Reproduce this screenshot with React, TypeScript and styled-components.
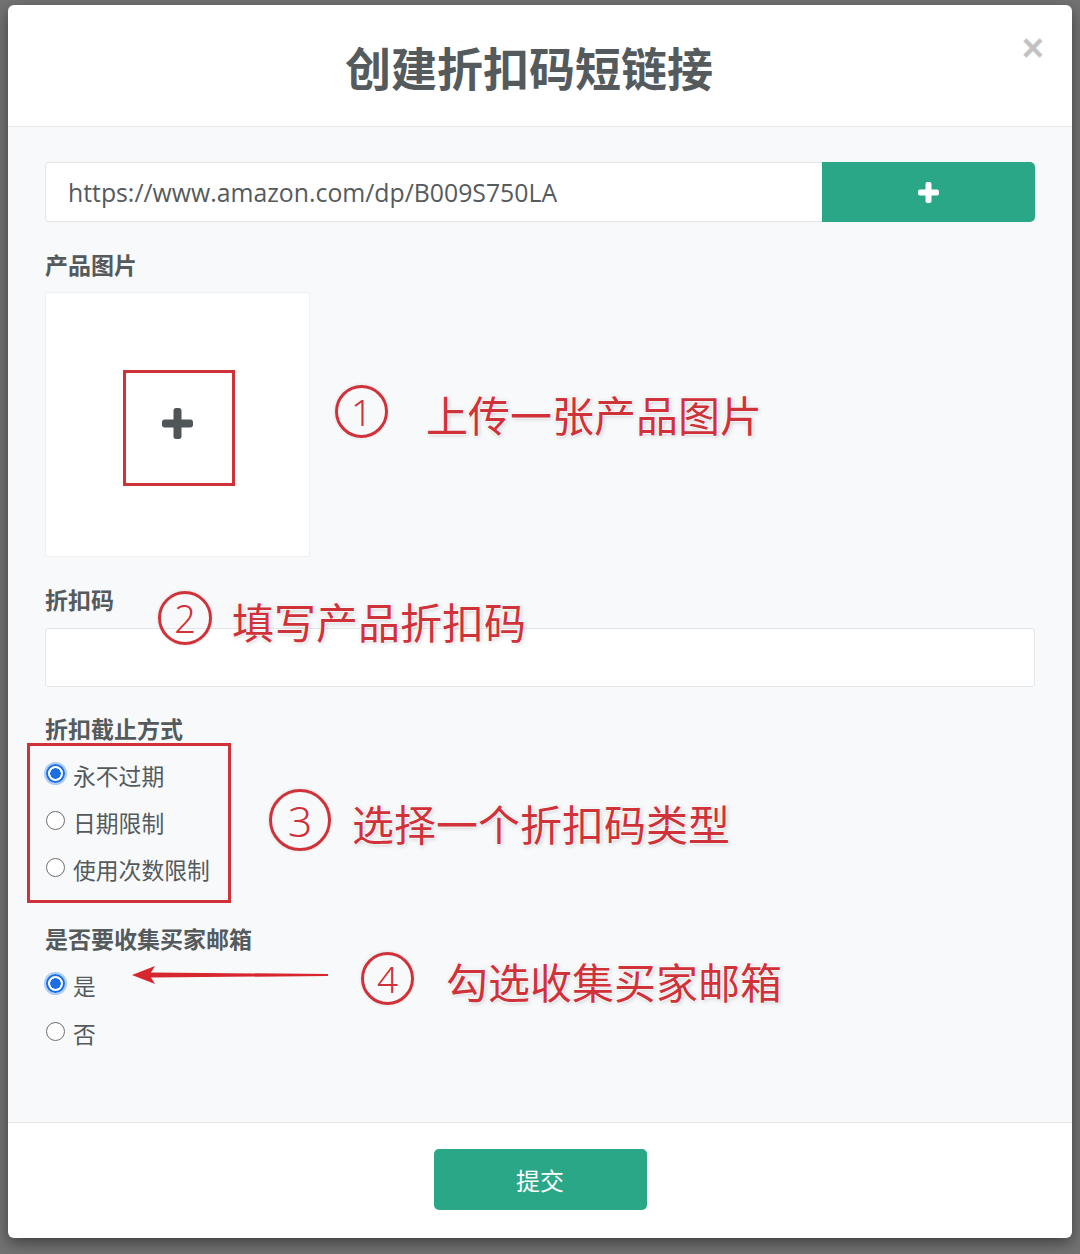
import styled, { createGlobalStyle } from "styled-components"

const GlobalStyle = createGlobalStyle`
  html, body {
    margin: 0;
    padding: 0;
  }
  body {
    background: #737373;
    font-family: "Noto Sans CJK SC", "Noto Sans", sans-serif;
  }
`

const RED = "#d0323a"
const GREEN = "#2aa787"
const TEXT = "#555a5c"

type Opt = { label: string; checked?: boolean }

const expiryOptions: Opt[] = [
  { label: "永不过期", checked: true },
  { label: "日期限制" },
  { label: "使用次数限制" },
]

const emailOptions: Opt[] = [{ label: "是", checked: true }, { label: "否" }]

const PlusIcon = ({ size, arm, color }: { size: number; arm: number; color: string }) => (
  <svg width={size} height={size} viewBox={`0 0 ${size} ${size}`}>
    <rect x={(size - arm) / 2} y={0} width={arm} height={size} rx={arm / 3} fill={color} />
    <rect x={0} y={(size - arm) / 2} width={size} height={arm} rx={arm / 3} fill={color} />
  </svg>
)

const Arrow = () => (
  <ArrowSvg width="196" height="24" viewBox="0 0 196 24">
    <polygon
      points="0,12 23,3 19,9.5 196,11 196,13 19,14.5 23,21"
      fill="#d8262f"
    />
  </ArrowSvg>
)

const RadioList = ({ options, $row }: { options: Opt[]; $row: number }) => (
  <>
    {options.map((o) => (
      <RadioRow key={o.label} $h={$row}>
        <RadioDot $checked={!!o.checked} />
        <span>{o.label}</span>
      </RadioRow>
    ))}
  </>
)

export default function App() {
  return (
    <Page>
      <GlobalStyle />
      <Modal>
        <Header>
          <Title>创建折扣码短链接</Title>
          <Close>×</Close>
        </Header>
        <Body>
          <UrlGroup>
            <UrlInput>https://www.amazon.com/dp/B009S750LA</UrlInput>
            <AddButton>
              <PlusIcon size={21} arm={6} color="#fff" />
            </AddButton>
          </UrlGroup>

          <Label $top={27} $bottom={13}>产品图片</Label>
          <ImageBox>
            <RedFrame>
              <PlusIcon size={31} arm={8} color="#505558" />
            </RedFrame>
          </ImageBox>

          <Label $top={27} $bottom={14}>折扣码</Label>
          <CodeInput />

          <Label $top={26} $bottom={9}>折扣截止方式</Label>
          <RadioGroup>
            <RadioList options={expiryOptions} $row={47} />
            <GroupFrame />
          </RadioGroup>

          <Label $top={30} $bottom={8}>是否要收集买家邮箱</Label>
          <RadioGroup>
            <RadioList options={emailOptions} $row={48} />
          </RadioGroup>

          <Note $x={327} $y={254} $gap={38}>
            <Num $size={53}>1</Num>
            <NoteText>上传一张产品图片</NoteText>
          </Note>
          <Note $x={150} $y={461} $gap={20}>
            <Num $size={54}>2</Num>
            <NoteText>填写产品折扣码</NoteText>
          </Note>
          <Note $x={261} $y={663} $gap={21}>
            <Num $size={62}>3</Num>
            <NoteText>选择一个折扣码类型</NoteText>
          </Note>
          <Note $x={353} $y={821} $gap={32}>
            <Num $size={53}>4</Num>
            <NoteText>勾选收集买家邮箱</NoteText>
          </Note>
          <Arrow />
        </Body>
        <Footer>
          <SubmitButton>提交</SubmitButton>
        </Footer>
      </Modal>
    </Page>
  )
}

const Page = styled.div`
  width: 1080px;
  height: 1254px;
  box-sizing: border-box;
  padding: 5px 8px 0;
  background: #737373;
  overflow: hidden;
`

const Modal = styled.div`
  width: 1064px;
  height: 1233px;
  background: #fff;
  border-radius: 6px;
  box-shadow: 0 5px 15px rgba(0, 0, 0, 0.45);
  display: flex;
  flex-direction: column;
  overflow: hidden;
`

const Header = styled.header`
  position: relative;
  flex: none;
  height: 121px;
  display: flex;
  align-items: center;
  justify-content: center;
  border-bottom: 1px solid #e6e8ea;
`

const Title = styled.h1`
  margin: 0 22px 0 0;
  font-size: 46px;
  font-weight: 700;
  color: ${TEXT};
`

const Close = styled.span`
  position: absolute;
  right: 28px;
  top: 22px;
  font-family: "Liberation Sans", Arial, sans-serif;
  font-size: 38px;
  font-weight: 700;
  color: #c2c2c2;
`

const Body = styled.main`
  position: relative;
  flex: 1;
  display: flex;
  flex-direction: column;
  align-items: flex-start;
  padding: 35px 37px 0;
  background: #f7f9fb;
`

const UrlGroup = styled.div`
  display: flex;
  width: 100%;
  height: 60px;
`

const UrlInput = styled.div`
  flex: 1;
  display: flex;
  align-items: center;
  padding-left: 22px;
  background: #fff;
  border: 1px solid #e4e7ea;
  border-right: none;
  border-radius: 4px 0 0 4px;
  font-family: "Open Sans", "Noto Sans", sans-serif;
  font-size: 24.8px;
  color: ${TEXT};
`

const AddButton = styled.div`
  width: 213px;
  display: flex;
  align-items: center;
  justify-content: center;
  background: ${GREEN};
  border-radius: 0 5px 5px 0;
`

const Label = styled.div<{ $top: number; $bottom: number }>`
  margin: ${(p) => p.$top}px 0 ${(p) => p.$bottom}px;
  font-size: 23px;
  line-height: 30px;
  font-weight: 700;
  color: ${TEXT};
`

const ImageBox = styled.div`
  width: 265px;
  height: 265px;
  box-sizing: border-box;
  display: flex;
  align-items: center;
  justify-content: center;
  background: #fff;
  border: 1px solid #eef0f2;
`

const RedFrame = styled.div`
  width: 112px;
  height: 116px;
  box-sizing: border-box;
  margin: 6px 0 0 3px;
  display: flex;
  align-items: center;
  justify-content: center;
  border: 3px solid ${RED};
  & > svg {
    margin: -8px 0 0 -4px;
  }
`

const CodeInput = styled.div`
  width: 100%;
  height: 59px;
  box-sizing: border-box;
  background: #fff;
  border: 1px solid #e4e7ea;
  border-radius: 3px;
`

const RadioGroup = styled.div`
  position: relative;
  display: flex;
  flex-direction: column;
`

const RadioRow = styled.div<{ $h: number }>`
  height: ${(p) => p.$h}px;
  display: flex;
  align-items: center;
  gap: 8px;
  font-size: 22.8px;
  color: ${TEXT};
`

const RadioDot = styled.span<{ $checked: boolean }>`
  width: 19px;
  height: 19px;
  box-sizing: border-box;
  border-radius: 50%;
  margin-left: 1px;
  border: ${(p) => (p.$checked ? "2px solid #1b6fe3" : "1.5px solid #6e6e6e")};
  background: ${(p) =>
    p.$checked ? "radial-gradient(circle, #1b6fe3 0 5px, #fff 5.5px)" : "#fff"};
  box-shadow: ${(p) => (p.$checked ? "0 0 0 2px rgba(80, 150, 240, 0.45)" : "none")};
  margin-top: -4px;
`

const GroupFrame = styled.div`
  position: absolute;
  left: -18px;
  top: -9px;
  width: 204px;
  height: 160px;
  box-sizing: border-box;
  border: 3px solid ${RED};
`

const Note = styled.div<{ $x: number; $y: number; $gap: number }>`
  position: absolute;
  left: ${(p) => p.$x}px;
  top: ${(p) => p.$y}px;
  height: 60px;
  display: flex;
  align-items: center;
  gap: ${(p) => p.$gap}px;
  color: ${RED};
`

const Num = styled.span<{ $size: number }>`
  width: ${(p) => p.$size}px;
  height: ${(p) => p.$size}px;
  box-sizing: border-box;
  flex: none;
  display: flex;
  align-items: center;
  justify-content: center;
  border: 3px solid ${RED};
  border-radius: 50%;
  font-family: "Noto Sans", sans-serif;
  font-size: ${(p) => Math.round(p.$size * 0.7)}px;
  font-weight: 300;
  line-height: 1;
  box-shadow: 0 0 2px #fff, 0 0 3px rgba(0, 0, 0, 0.2);
  text-shadow: 0 0 2px #fff, 0 0 3px #fff;
`

const NoteText = styled.span`
  font-size: 42px;
  font-weight: 400;
  line-height: 1;
  margin-top: 6px;
  white-space: nowrap;
  text-shadow: 0 0 2px #fff, 0 0 2px #fff, 0 0 3px #fff, 1px 1px 4px rgba(0, 0, 0, 0.25);
`

const ArrowSvg = styled.svg`
  position: absolute;
  left: 124px;
  top: 836px;
`

const Footer = styled.footer`
  flex: none;
  height: 115px;
  display: flex;
  align-items: center;
  justify-content: center;
  border-top: 1px solid #e6e8ea;
`

const SubmitButton = styled.button`
  width: 213px;
  height: 61px;
  margin-top: -2px;
  border: none;
  border-radius: 5px;
  background: ${GREEN};
  color: #fff;
  font-family: "Noto Sans CJK SC", sans-serif;
  font-size: 24px;
`
